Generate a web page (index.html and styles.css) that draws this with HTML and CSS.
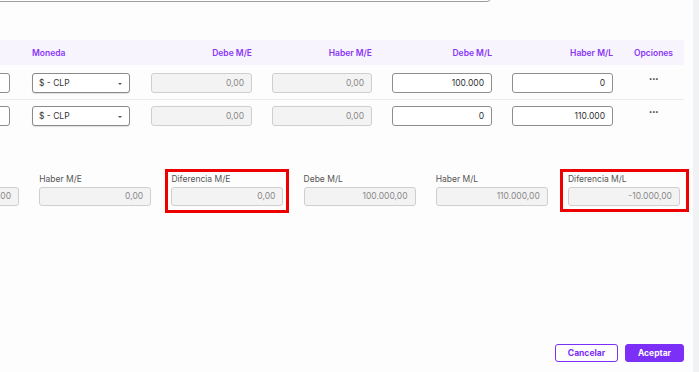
FILE: index.html
```html
<!DOCTYPE html>
<html lang="es">
<head>
<meta charset="utf-8">
<title>Asiento</title>
<link rel="stylesheet" href="styles.css">
</head>
<body>
<div class="main">
  <div class="topfield"></div>

  <div class="table">
    <div class="trow thead">
      <div class="cell"></div>
      <div class="cell first">Moneda</div>
      <div class="cell num">Debe M/E</div>
      <div class="cell num">Haber M/E</div>
      <div class="cell num">Debe M/L</div>
      <div class="cell num">Haber M/L</div>
      <div class="cell center">Opciones</div>
    </div>
    <div class="trow tbody sep">
      <div class="cell"><div class="inp"></div></div>
      <div class="cell first"><div class="select"><span>$ - CLP</span><span class="caret"></span></div></div>
      <div class="cell"><div class="inp dis">0,00</div></div>
      <div class="cell"><div class="inp dis">0,00</div></div>
      <div class="cell"><div class="inp">100.000</div></div>
      <div class="cell"><div class="inp">0</div></div>
      <div class="cell center"><span class="dots">&middot;&middot;&middot;</span></div>
    </div>
    <div class="trow tbody">
      <div class="cell"><div class="inp"></div></div>
      <div class="cell first"><div class="select"><span>$ - CLP</span><span class="caret"></span></div></div>
      <div class="cell"><div class="inp dis">0,00</div></div>
      <div class="cell"><div class="inp dis">0,00</div></div>
      <div class="cell"><div class="inp">0</div></div>
      <div class="cell"><div class="inp">110.000</div></div>
      <div class="cell center"><span class="dots">&middot;&middot;&middot;</span></div>
    </div>
  </div>

  <div class="summary">
    <div class="field"><div class="inp dis">100.000,00</div></div>
    <div class="field"><label>Haber M/E</label><div class="inp dis">0,00</div></div>
    <div class="field hl hl1"><label>Diferencia M/E</label><div class="inp dis">0,00</div></div>
    <div class="field"><label>Debe M/L</label><div class="inp dis">100.000,00</div></div>
    <div class="field"><label>Haber M/L</label><div class="inp dis">110.000,00</div></div>
    <div class="field hl hl2"><label>Diferencia M/L</label><div class="inp dis">-10.000,00</div></div>
  </div>

  <div class="footer">
    <button class="btn outline">Cancelar</button>
    <button class="btn solid">Aceptar</button>
  </div>
</div>
<div class="scrollstrip"></div>
</body>
</html>
```

FILE: styles.css
```css
* { box-sizing: border-box; }

html, body {
  margin: 0;
  padding: 0;
  width: 699px;
  height: 372px;
  overflow: hidden;
  background: #fdfdfd;
  font-family: Inter, "Noto Sans", sans-serif;
  font-size: 8.5px;
  color: #444;
}

body {
  display: flex;
}

.main {
  flex: 0 0 693px;
  height: 372px;
  display: flex;
  flex-direction: column;
  overflow: hidden;
}

.scrollstrip {
  flex: 0 0 6px;
  background: #f1f2f4;
}

.topfield {
  margin-top: -19px;
  margin-left: -10px;
  width: 501px;
  height: 21px;
  border: 1px solid #9c9c9c;
  border-radius: 4px;
  background: #fff;
  flex: none;
}

.table {
  margin-top: 38px;
  margin-left: -100px;
  width: 784px;
  flex: none;
}

.trow {
  display: grid;
  grid-template-columns: 120px 121px 121px 120px 120px 121px 61px;
}

.thead {
  height: 25px;
  background: #f7f4fe;
  align-items: center;
  color: #8a36f7;
  font-weight: 600;
}

.tbody {
  height: 32px;
  align-items: center;
}

.tbody.sep {
  height: 35px;
  border-bottom: 1px solid #ececf0;
  padding-top: 2px;
}

.cell {
  padding: 0 10px;
}

.cell.first {
  padding-left: 12px;
}

.cell.num {
  text-align: right;
}

.cell.center {
  text-align: center;
}

.inp {
  height: 20px;
  border: 1px solid #8e8e8e;
  border-radius: 3px;
  background: #fff;
  text-align: right;
  padding: 0 7px;
  line-height: 18px;
  color: #333;
  font-size: 8.5px;
}

.inp.dis {
  background: #f3f3f3;
  border-color: #cfcfcf;
  color: #8a8a8a;
}

.select {
  width: 98px;
  height: 20px;
  border: 1px solid #8a8a8a;
  border-radius: 3px;
  background: #fff;
  box-shadow: 0 1px 1px rgba(0,0,0,0.12);
  display: flex;
  align-items: center;
  justify-content: space-between;
  padding: 0 7px 0 6px;
  color: #333;
}

.caret {
  width: 0;
  height: 0;
  border-left: 2.5px solid transparent;
  border-right: 2.5px solid transparent;
  border-top: 2.5px solid #555;
  margin-top: 1px;
}

.dots {
  display: inline-block;
  font-weight: 700;
  font-size: 11px;
  letter-spacing: -0.5px;
  color: #333;
  position: relative;
  top: -4px;
}

.summary {
  margin-top: 42px;
  margin-left: -93px;
  display: grid;
  grid-template-columns: repeat(6, 112px);
  column-gap: 20.2px;
  align-items: end;
  flex: none;
}

.field {
  display: flex;
  flex-direction: column;
  gap: 3px;
  position: relative;
}

.field label {
  color: #555;
  line-height: 10px;
  font-size: 8.5px;
}

.field .inp {
  height: 19px;
  line-height: 17px;
}

.hl::after {
  content: "";
  position: absolute;
  border: 3px solid #ee0000;
}

.hl1::after {
  left: -6px;
  right: -6px;
  top: -5px;
  bottom: -7px;
}

.hl2::after {
  left: -8px;
  right: -9px;
  top: -5px;
  bottom: -6px;
}

.footer {
  margin-top: auto;
  padding: 0 9px 10px 0;
  display: flex;
  justify-content: flex-end;
  gap: 7px;
}

.btn {
  height: 18px;
  border-radius: 3px;
  font-family: Inter, "Noto Sans", sans-serif;
  font-size: 8.5px;
  font-weight: 700;
  padding: 0;
  cursor: pointer;
}

.btn.outline {
  width: 63px;
  background: #fff;
  border: 1px solid #7b2ff7;
  color: #7b2ff7;
}

.btn.solid {
  width: 59px;
  background: #7b2ff7;
  border: 1px solid #7b2ff7;
  color: #fff;
}
```
